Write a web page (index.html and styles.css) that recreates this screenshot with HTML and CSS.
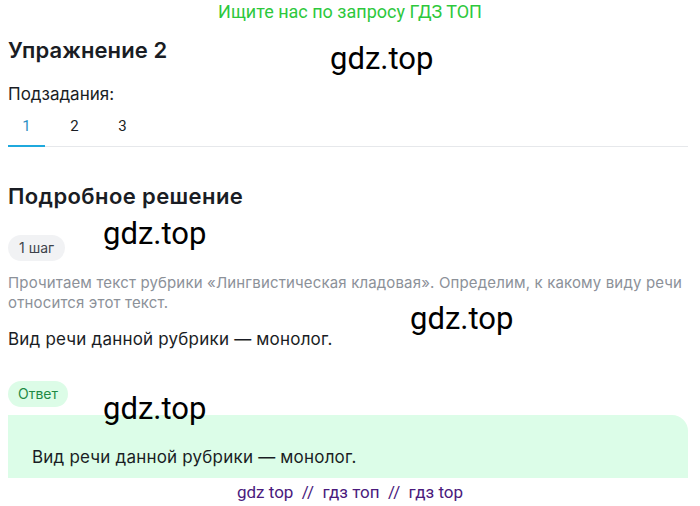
FILE: index.html
```html
<!DOCTYPE html>
<html lang="ru">
<head>
    <meta charset="UTF-8">
    <title>Упражнение 2</title>
    <link rel="stylesheet" href="styles.css">
</head>
<body>
    <div class="promo">Ищите нас по запросу ГДЗ ТОП</div>

    <div class="page">
        <h1 class="title">Упражнение 2</h1>

        <div class="subtasks-label">Подзадания:</div>
        <div class="tabs">
            <span class="tab active">1</span>
            <span class="tab">2</span>
            <span class="tab">3</span>
        </div>

        <h2 class="section-title">Подробное решение</h2>

        <span class="pill step">1 шаг</span>
        <p class="hint">Прочитаем текст рубрики «Лингвистическая кладовая». Определим, к какому виду речи относится этот текст.</p>
        <p class="text">Вид речи данной рубрики — монолог.</p>

        <span class="pill answer">Ответ</span>
        <div class="answer-box">
            <p class="text">Вид речи данной рубрики — монолог.</p>
        </div>
    </div>

    <div class="footer">gdz top &nbsp;//&nbsp; гдз топ &nbsp;//&nbsp; гдз top</div>

    <!-- водяные знаки -->
    <div class="mark mark-1">gdz.top</div>
    <div class="mark mark-2">gdz.top</div>
    <div class="mark mark-3">gdz.top</div>
    <div class="mark mark-4">gdz.top</div>
</body>
</html>
```

FILE: styles.css
```css
body {
    margin: 0;
    font-family: Inter, 'Noto Sans', sans-serif;
    color: #1a1d24;
    background: #fff;
    position: relative;
    height: 506px;
    overflow: hidden;
}

.promo {
    font-family: Roboto, sans-serif;
    font-size: 18px;
    color: #2dc83c;
    text-align: center;
    height: 24px;
    line-height: 24px;
}

.page {
    padding: 0 12px 0 8px;
}

.title {
    font-size: 22px;
    font-weight: 600;
    letter-spacing: 0.1px;
    margin: 12px 0 0;
    line-height: 28px;
}

.subtasks-label {
    font-size: 17px;
    margin-top: 20px;
    line-height: 20px;
}

.tabs {
    display: flex;
    border-bottom: 1px solid #e6e8eb;
    margin-top: 12px;
}

.tab {
    font-family: Roboto, sans-serif;
    font-size: 15px;
    width: 37px;
    text-align: center;
    padding: 1px 0 10px;
    color: #1a1d24;
    border-bottom: 2px solid transparent;
    margin-bottom: -1px;
    margin-right: 11px;
}

.tab.active {
    color: #2a8fc4;
    border-bottom-color: #1fa9dd;
}

.section-title {
    font-size: 22px;
    font-weight: 600;
    letter-spacing: 0.4px;
    margin: 35px 0 0;
    line-height: 28px;
}

.pill {
    display: inline-block;
    font-size: 14px;
    padding: 0 11px;
    height: 26px;
    line-height: 26px;
    border-radius: 13px;
}

.step {
    background: #f1f2f4;
    color: #3e434b;
    margin-top: 25px;
}

.hint {
    font-size: 15px;
    letter-spacing: 0.15px;
    line-height: 20px;
    color: #8c9199;
    margin: 12px 0 0;
}

.text {
    font-size: 17px;
    letter-spacing: 0.2px;
    line-height: 22px;
    margin: 15px 0 0;
}

.answer {
    background: #dcfce7;
    color: #1e8a44;
    padding: 0 10px;
    margin-top: 31px;
}

.answer-box {
    background: #dcfde8;
    border-radius: 0 16px 0 0;
    margin-top: 8px;
    padding: 21px 24px 20px;
}

.answer-box .text {
    margin: 10px 0 0;
}

.footer {
    position: absolute;
    left: 0;
    right: 0;
    top: 478px;
    height: 28px;
    background: #fff;
    font-family: Roboto, sans-serif;
    font-size: 17px;
    line-height: 28px;
    color: #4a1a7d;
    text-align: center;
}

.mark {
    position: absolute;
    font-family: Roboto, sans-serif;
    font-size: 31px;
    color: #000;
    line-height: 36px;
}

.mark-1 { left: 330px; top: 41px; }
.mark-2 { left: 103px; top: 216px; }
.mark-3 { left: 410px; top: 301px; }
.mark-4 { left: 103px; top: 391px; }
```
